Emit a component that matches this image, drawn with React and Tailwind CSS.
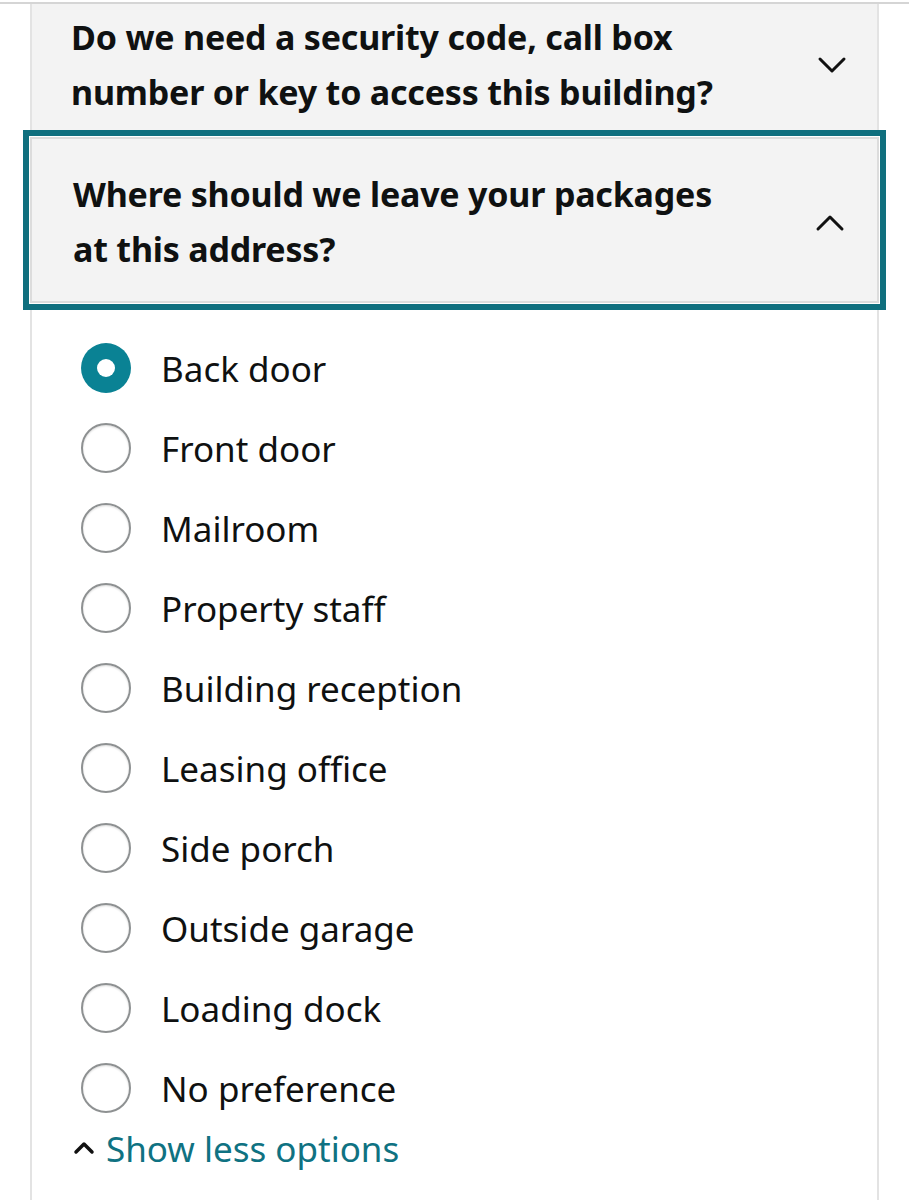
import { useState } from "react";

const options = [
  "Back door",
  "Front door",
  "Mailroom",
  "Property staff",
  "Building reception",
  "Leasing office",
  "Side porch",
  "Outside garage",
  "Loading dock",
  "No preference",
];

function Chevron({ up }) {
  return (
    <svg width="30" height="20" viewBox="0 0 30 20" className="shrink-0">
      <path
        d={up ? "M3 17 L15 5 L27 17" : "M3 4 L15 16 L27 4"}
        fill="none"
        stroke="#111"
        strokeWidth="3"
        strokeLinecap="round"
        strokeLinejoin="round"
      />
    </svg>
  );
}

export default function App() {
  const [selected, setSelected] = useState("Back door");

  return (
    <div className="w-[909px] h-[1200px] bg-white overflow-hidden font-['Noto_Sans',sans-serif] text-[#0f1111]">
      <div className="h-[2px] bg-white" />
      <div className="h-[2px] bg-[#d5d5d5]" />
      <div className="mx-[30px] border-x-2 border-[#e3e3e3] h-[1196px]">
        <div className="bg-[#f3f3f3] flex items-center justify-between pl-[39px] pr-[30px] pt-[6px] pb-[11px]">
          <p className="font-bold text-[34px] leading-[55px] tracking-[-0.2px] w-[660px]">
            Do we need a security code, call box number or key to access this building?
          </p>
          <Chevron />
        </div>

        <div className="mt-[6px] -mx-[2px] border-2 border-[#dcdcdc] bg-[#f3f3f3] shadow-[0_0_0_1px_#ffffff,0_0_0_7px_#0f6f7e] flex items-center justify-between pl-[41px] pr-[32px] pt-[28px] pb-[24px]">
          <p className="font-bold text-[34px] leading-[55px] tracking-[-0.2px] w-[660px]">
            Where should we leave your packages at this address?
          </p>
          <Chevron up />
        </div>

        <div className="pt-[25px] pl-[49px]">
          {options.map((o) => {
            const on = o === selected;
            return (
              <label
                key={o}
                className="flex items-center h-[80px] cursor-pointer"
                onClick={() => setSelected(o)}
              >
                {on ? (
                  <span className="w-[50px] h-[50px] rounded-full bg-[#0a8294] flex items-center justify-center shrink-0">
                    <span className="w-[18px] h-[18px] rounded-full bg-white" />
                  </span>
                ) : (
                  <span className="w-[50px] h-[50px] rounded-full border-2 border-[#8e9192] bg-white shadow-[inset_0_1px_2px_rgba(0,0,0,0.15)] shrink-0" />
                )}
                <span className="ml-[30px] text-[35px] leading-none">{o}</span>
              </label>
            );
          })}
          <div className="flex items-center -ml-[8px] mt-[-15px] h-[70px]">
            <svg width="22" height="14" viewBox="0 0 22 14" className="shrink-0">
              <path
                d="M3 11 L11 3 L19 11"
                fill="none"
                stroke="#111"
                strokeWidth="3.5"
                strokeLinecap="round"
                strokeLinejoin="round"
              />
            </svg>
            <span className="ml-[11px] text-[35px] leading-none text-[#0f7282]">
              Show less options
            </span>
          </div>
        </div>
      </div>
    </div>
  );
}
